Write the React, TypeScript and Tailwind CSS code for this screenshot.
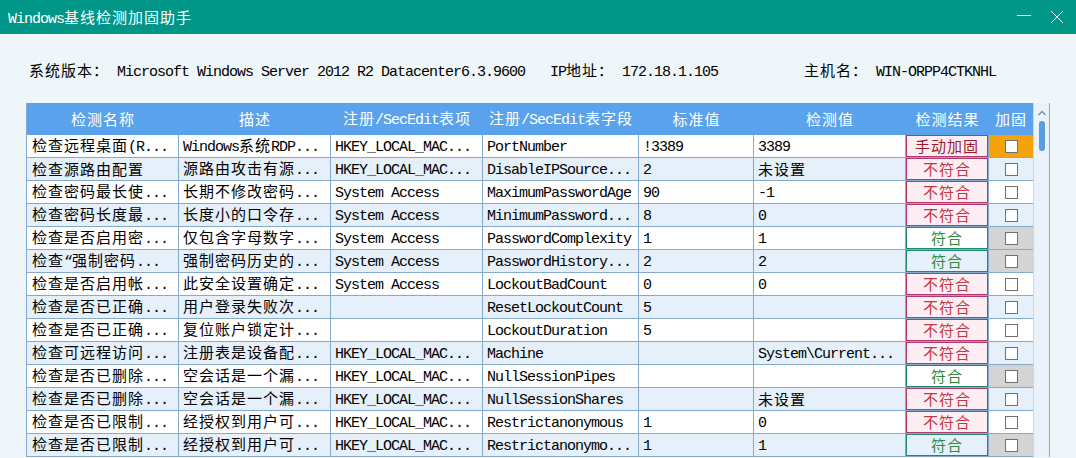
const CJK = /([\u2E80-\u9FFF\uFF00-\uFFEF\u3000-\u303F]+)/;

// mixed text: CJK in Noto, latin in a mono face (SimSun-like half width)
function T({ s }: { s: string }) {
  return (
    <span className="whitespace-pre leading-[18px]">
      {s.split(CJK).map((p, i) =>
        p === "" ? null : i % 2 === 1 ? (
          <span key={i} className="font-['Noto_Sans_CJK_SC',sans-serif] text-[15px] tracking-[1px]">
            {p}
          </span>
        ) : (
          <span key={i} className="font-['Liberation_Mono',monospace] text-[15px] tracking-[-1px]">
            {p}
          </span>
        )
      )}
    </span>
  );
}

type Row = {
  name: string;
  desc: string;
  key: string;
  field: string;
  std: string;
  val: string;
  result: "不符合" | "符合" | "手动加固";
};

const rows: Row[] = [
  { name: "检查远程桌面(R...", desc: "Windows系统RDP...", key: "HKEY_LOCAL_MAC...", field: "PortNumber", std: "!3389", val: "3389", result: "手动加固" },
  { name: "检查源路由配置", desc: "源路由攻击有源...", key: "HKEY_LOCAL_MAC...", field: "DisableIPSource...", std: "2", val: "未设置", result: "不符合" },
  { name: "检查密码最长使...", desc: "长期不修改密码...", key: "System Access", field: "MaximumPasswordAge", std: "90", val: "-1", result: "不符合" },
  { name: "检查密码长度最...", desc: "长度小的口令存...", key: "System Access", field: "MinimumPassword...", std: "8", val: "0", result: "不符合" },
  { name: "检查是否启用密...", desc: "仅包含字母数字...", key: "System Access", field: "PasswordComplexity", std: "1", val: "1", result: "符合" },
  { name: "检查“强制密码...", desc: "强制密码历史的...", key: "System Access", field: "PasswordHistory...", std: "2", val: "2", result: "符合" },
  { name: "检查是否启用帐...", desc: "此安全设置确定...", key: "System Access", field: "LockoutBadCount", std: "0", val: "0", result: "不符合" },
  { name: "检查是否已正确...", desc: "用户登录失败次...", key: "", field: "ResetLockoutCount", std: "5", val: "", result: "不符合" },
  { name: "检查是否已正确...", desc: "复位账户锁定计...", key: "", field: "LockoutDuration", std: "5", val: "", result: "不符合" },
  { name: "检查可远程访问...", desc: "注册表是设备配...", key: "HKEY_LOCAL_MAC...", field: "Machine", std: "", val: "System\\Current...", result: "不符合" },
  { name: "检查是否已删除...", desc: "空会话是一个漏...", key: "HKEY_LOCAL_MAC...", field: "NullSessionPipes", std: "", val: "", result: "符合" },
  { name: "检查是否已删除...", desc: "空会话是一个漏...", key: "HKEY_LOCAL_MAC...", field: "NullSessionShares", std: "", val: "未设置", result: "不符合" },
  { name: "检查是否已限制...", desc: "经授权到用户可...", key: "HKEY_LOCAL_MAC...", field: "Restrictanonymous", std: "1", val: "0", result: "不符合" },
  { name: "检查是否已限制...", desc: "经授权到用户可...", key: "HKEY_LOCAL_MAC...", field: "Restrictanonymo...", std: "1", val: "1", result: "符合" },
];

function Cell({ w, s, first }: { w: string; s: string; first?: boolean }) {
  return (
    <div className={`${w} h-full flex items-center border-r border-[#86aacb] overflow-hidden whitespace-nowrap ${first ? "pl-[5px]" : "pl-[4px]"}`}>
      <T s={s} />
    </div>
  );
}

function Result({ r }: { r: Row["result"] }) {
  if (r === "符合") {
    return (
      <div className="w-full h-full border border-[#1f8a72] flex items-center justify-center text-[#2e8b3a]">
        <T s={r} />
      </div>
    );
  }
  return (
    <div className={`w-full h-full border border-[#b23a6e] bg-[#fdeef4] flex items-center justify-center ${r === "手动加固" ? "text-[#a3172b]" : "text-[#c8343f]"}`}>
      <T s={r} />
    </div>
  );
}

export default function App() {
  return (
    <div className="w-[1076px] h-[458px] overflow-hidden bg-[#eef6f9] text-black">
      {/* title bar */}
      <div className="h-[34px] bg-[#009688] flex items-center justify-between pl-[8px] pr-[12px] text-white">
        <div className="text-[16px]">
          <T s="Windows基线检测加固助手" />
        </div>
        <div className="flex items-center gap-[18px]">
          <svg width="16" height="16" viewBox="0 0 16 16">
            <line x1="1" y1="6.5" x2="15" y2="6.5" stroke="white" strokeWidth="1" />
          </svg>
          <svg width="14" height="14" viewBox="0 0 14 14">
            <path d="M1 1 L13 13 M13 1 L1 13" stroke="white" strokeWidth="1" fill="none" />
          </svg>
        </div>
      </div>

      {/* system info */}
      <div className="h-[69px] flex items-center pl-[29px] pt-[3px] whitespace-nowrap">
        <div className="w-[521px]">
          <T s="系统版本： Microsoft Windows Server 2012 R2 Datacenter6.3.9600" />
        </div>
        <div className="w-[254px]">
          <T s="IP地址： 172.18.1.105" />
        </div>
        <div>
          <T s="主机名： WIN-ORPP4CTKNHL" />
        </div>
      </div>

      {/* table */}
      <div className="ml-[26px] w-[1024px] flex border-l border-r border-[#86aacb]">
        <div className="w-[1006px]">
          <div className="h-[32px] flex bg-[#5aa3ec] text-white">
            {[
              ["w-[152px]", "检测名称"],
              ["w-[152px]", "描述"],
              ["w-[152px]", "注册/SecEdit表项"],
              ["w-[156px]", "注册/SecEdit表字段"],
              ["w-[115px]", "标准值"],
              ["w-[152px]", "检测值"],
              ["w-[83px]", "检测结果"],
              ["w-[44px]", "加固"],
            ].map(([w, t], i) => (
              <div key={i} className={`${w} h-full flex items-center justify-center whitespace-nowrap`}>
                <T s={t} />
              </div>
            ))}
          </div>
          {rows.map((r, i) => (
            <div
              key={i}
              className={`h-[23px] flex border-b border-[#86aacb] ${i % 2 === 1 ? "bg-[#e5f0fb]" : "bg-white"}`}
            >
              <Cell w="w-[152px]" s={r.name} first />
              <Cell w="w-[152px]" s={r.desc} />
              <Cell w="w-[152px]" s={r.key} />
              <Cell w="w-[156px]" s={r.field} />
              <Cell w="w-[115px]" s={r.std} />
              <Cell w="w-[152px]" s={r.val} />
              <div className="w-[83px] h-full border-r border-[#86aacb]">
                <Result r={r.result} />
              </div>
              <div
                className={`w-[44px] h-full flex items-center justify-center ${
                  r.result === "手动加固" ? "bg-[#f5a30a]" : r.result === "符合" ? "bg-[#d4d4d4]" : ""
                }`}
              >
                <div className="w-[13px] h-[13px] bg-white border border-[#707070]" />
              </div>
            </div>
          ))}
        </div>
        {/* scrollbar */}
        <div className="w-[16px] bg-[#eaf3fb] border-l border-[#c5d9ec] flex flex-col items-center">
          <svg width="10" height="8" viewBox="0 0 10 8" className="mt-[6px]">
            <path d="M1.5 6 L5 2.5 L8.5 6" stroke="#6f8fb5" strokeWidth="1.3" fill="none" />
          </svg>
          <div className="mt-[4px] w-[6px] h-[30px] rounded-full bg-[#5b9be0]" />
        </div>
      </div>
    </div>
  );
}
